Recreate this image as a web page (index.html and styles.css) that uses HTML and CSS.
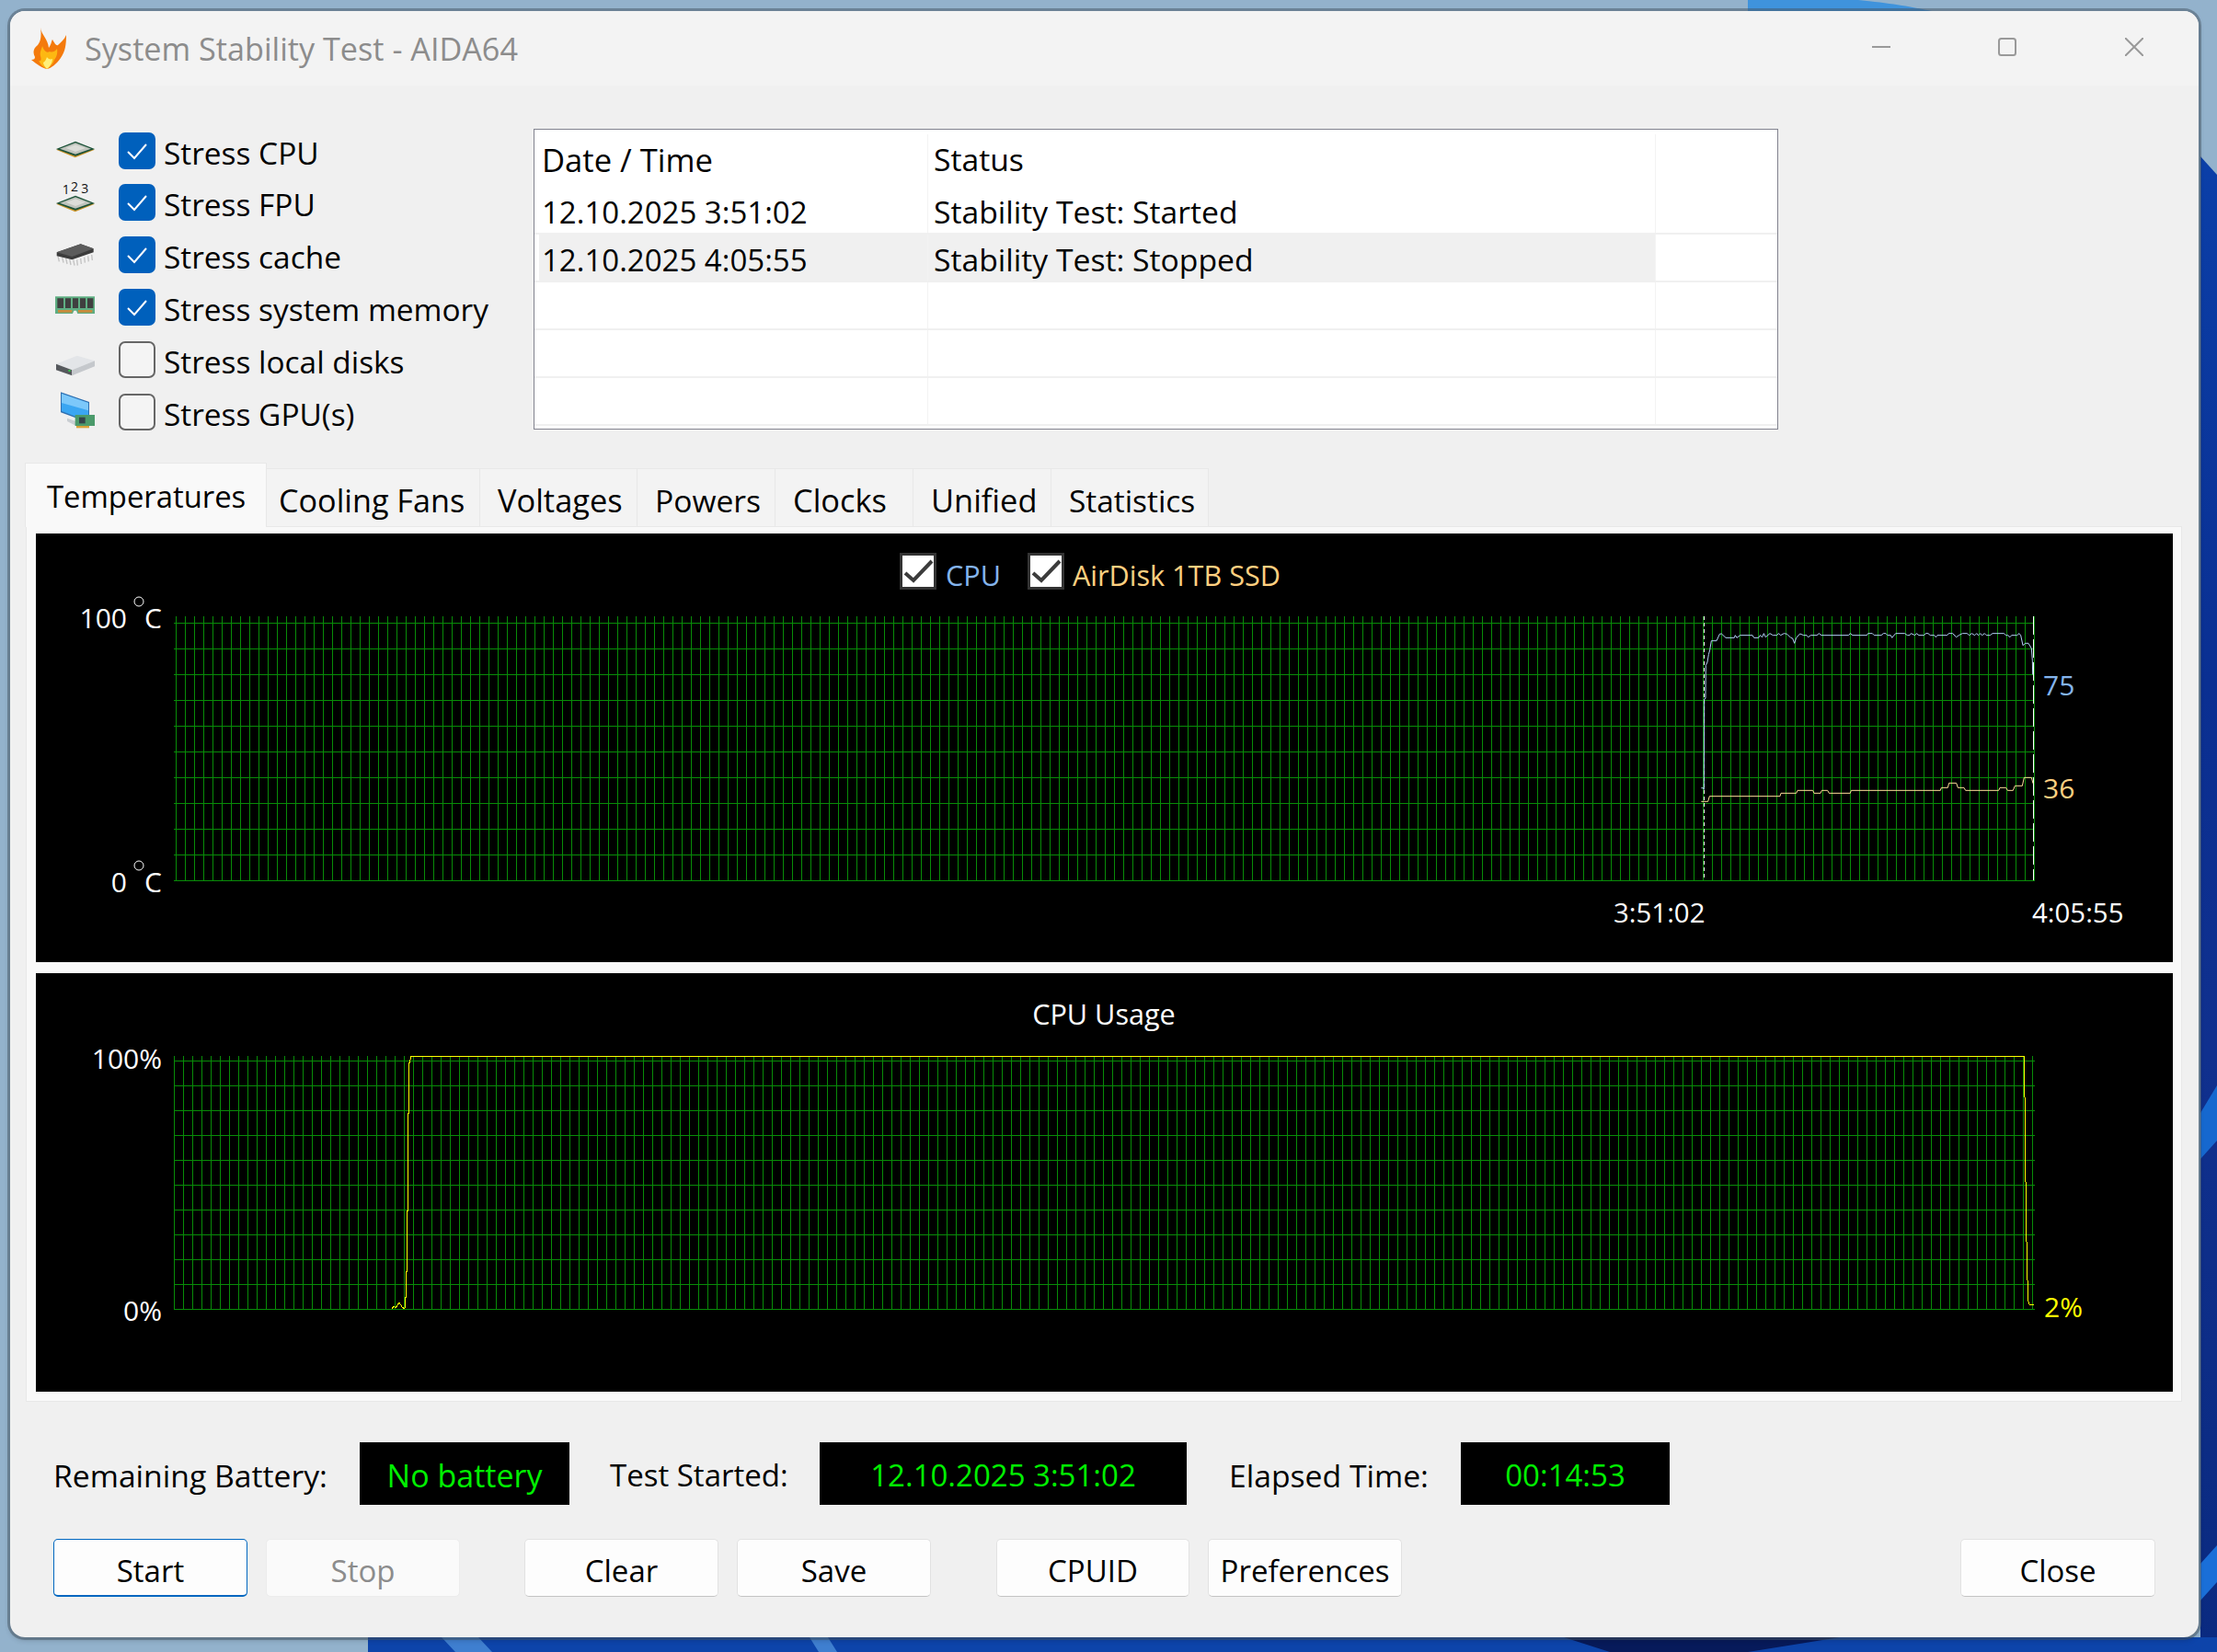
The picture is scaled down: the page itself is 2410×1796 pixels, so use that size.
FILE: index.html
```html
<!DOCTYPE html>
<html lang="en">
<head>
    <meta charset="UTF-8">
    <title>System Stability Test - AIDA64</title>
    <link rel="stylesheet" href="styles.css">
</head>
<body>
    <svg class="wallpaper" viewBox="0 0 2410 1796" preserveAspectRatio="none">
        <defs>
            <linearGradient id="wallRight" x1="0" y1="0" x2="0" y2="1">
                <stop offset="0" stop-color="#0b3fa8"/>
                <stop offset="0.35" stop-color="#0a2f92"/>
                <stop offset="0.6" stop-color="#10308e"/>
                <stop offset="1" stop-color="#0a2a80"/>
            </linearGradient>
        </defs>
        <rect width="2410" height="1796" fill="#93b2cc"/>
        <path d="M1900 0H2020C2060 4 2080 8 2100 12H1900Z" fill="#3f93dc"/>
        <path d="M2392 170L2410 190V1796H2392Z" fill="url(#wallRight)"/>
        <path d="M2392 1210L2410 1180V1240L2392 1260Z" fill="#1668cf"/>
        <path d="M2392 1700L2410 1680V1720L2392 1740Z" fill="#1a6fd8"/>
        <path d="M400 1780H2410V1796H400Z" fill="#0d44aa"/>
        <path d="M1700 1780H2000L1900 1796H1750Z" fill="#071a5a"/>
        <path d="M480 1780H520L535 1796H495ZM880 1780H900L910 1796H890Z" fill="#3f7fd0"/>
    </svg>

    <div class="window">
        <div class="titlebar">
            <svg class="app-icon" viewBox="0 0 38 45">
                <path d="M10 0C11 8 18 12 19 22C22 18 22 14 23 13C26 18 27 20 29 19C32 16 36 13 38 8C38 18 37 26 32 33C27 40 22 44 17 45C12 44 6 40 0 35C3 35 4 34 4 32C1 26 3 22 7 19C11 14 11 7 10 0Z" fill="#f47a0c"/>
                <path d="M12 20C14 26 17 28 20 26C22 27 25 27 28 23C29 28 27 33 25 35C24 39 20 43 17 45C13 43 10 40 8 36C11 37 11 34 10 31C9 27 11 24 12 20Z" fill="#fdb812"/>
                <path d="M17 32C18 34 21 35 23 34C23 38 20 43 17 45C15 43 13 40 13 38C15 37 16 35 17 32Z" fill="#fff07a"/>
            </svg>
            <span class="title-text">System Stability Test - AIDA64</span>
            <div class="controls">
                <svg class="ctl ctl-min" viewBox="0 0 20 20"><path d="M0 10H20"/></svg>
                <svg class="ctl ctl-max" viewBox="0 0 20 20"><rect x="1" y="1" width="18" height="18" rx="2.5"/></svg>
                <svg class="ctl ctl-close" viewBox="0 0 20 20"><path d="M0 0L20 20M20 0L0 20"/></svg>
            </div>
        </div>

        <div class="content">
            <div class="top-row">
                <div class="stress-list">
                    <div class="stress-row">
                        <svg class="stress-icon" viewBox="57 16 129 171">
                            <path d="M60 99L122 125L186 99L122 84Z" fill="#cf962a"/>
                            <path d="M60 97L123 72L186 97L123 120Z" fill="#1c5238"/>
                            <path d="M72 96L123 77L174 96L123 114Z" fill="#bfc3bc"/>
                            <path d="M92 94L123 83L156 94L123 106Z" fill="#dcddd8"/>
                        </svg>
                        <span class="check on"><svg viewBox="0 0 40 40"><path d="M10 21L17 28L30 13"/></svg></span>
                        <span class="stress-label">Stress CPU</span>
                    </div>
                    <div class="stress-row">
                        <svg class="stress-icon" viewBox="57 186 129 171">
                            <text x="80" y="243" class="fpu-num">1</text>
                            <text x="108" y="233" class="fpu-num">2</text>
                            <text x="142" y="240" class="fpu-num">3</text>
                            <path d="M60 275L122 301L186 275L122 260Z" fill="#cf962a"/>
                            <path d="M60 273L123 248L186 273L123 296Z" fill="#1c5238"/>
                            <path d="M72 272L123 253L174 272L123 290Z" fill="#bfc3bc"/>
                            <path d="M92 270L123 259L156 270L123 282Z" fill="#dcddd8"/>
                        </svg>
                        <span class="check on"><svg viewBox="0 0 40 40"><path d="M10 21L17 28L30 13"/></svg></span>
                        <span class="stress-label">Stress FPU</span>
                    </div>
                    <div class="stress-row">
                        <svg class="stress-icon" viewBox="57 356 129 171">
                            <path d="M66 444L70 462M80 448L84 466M92 451L96 470M104 454L108 473M116 456L120 475M128 456L130 475M140 452L142 470M152 448L154 466M164 444L166 462M176 440L178 458" stroke="#c2c2c2" stroke-width="4"/>
                            <path d="M62 432L140 405L182 420V432L112 456L62 444Z" fill="#3c3c3c"/>
                            <path d="M62 432L112 446L182 420L140 405Z" fill="#5c5c5c"/>
                        </svg>
                        <span class="check on"><svg viewBox="0 0 40 40"><path d="M10 21L17 28L30 13"/></svg></span>
                        <span class="stress-label">Stress cache</span>
                    </div>
                    <div class="stress-row">
                        <svg class="stress-icon" viewBox="57 527 129 171">
                            <path d="M57 576H186V632H130L126 622H118L114 632H57Z" fill="#5fae82"/>
                            <path d="M64 582H84V614H64ZM90 582H108V614H90ZM114 582H132V614H114ZM138 582H156V614H138ZM162 582H181V614H162Z" fill="#3f3f3f"/>
                            <path d="M66 620H112V628H66ZM132 620H178V628H132Z" fill="#c98b3c"/>
                        </svg>
                        <span class="check on"><svg viewBox="0 0 40 40"><path d="M10 21L17 28L30 13"/></svg></span>
                        <span class="stress-label">Stress system memory</span>
                    </div>
                    <div class="stress-row">
                        <svg class="stress-icon" viewBox="57 697 129 171">
                            <path d="M60 798L128 771L186 788L112 818Z" fill="#e3e5e8"/>
                            <path d="M60 798L112 818V836L60 818Z" fill="#55585c"/>
                            <path d="M112 818L186 788V806L112 836Z" fill="#c5c8cc"/>
                            <rect x="100" y="817" width="7" height="6" fill="#35c24a"/>
                        </svg>
                        <span class="check"></span>
                        <span class="stress-label">Stress local disks</span>
                    </div>
                    <div class="stress-row">
                        <svg class="stress-icon" viewBox="57 868 129 171">
                            <path d="M75 890L168 922V990L75 956Z" fill="#2f6fb0"/>
                            <path d="M78 895L165 925V986L78 952Z" fill="#3aa6f2"/>
                            <path d="M78 895L165 925V950L78 925Z" fill="#7cc8fa"/>
                            <path d="M96 975L125 985V1000L96 985Z" fill="#c9ced2"/>
                            <rect x="122" y="964" width="64" height="36" fill="#4b9a6b"/>
                            <rect x="135" y="972" width="20" height="20" fill="#34434a"/>
                            <rect x="126" y="1000" width="42" height="7" fill="#d9a23a"/>
                        </svg>
                        <span class="check"></span>
                        <span class="stress-label">Stress GPU(s)</span>
                    </div>
                </div>

                <div class="log-list">
                    <div class="log-row log-head"><span class="log-date">Date / Time</span><span class="log-status">Status</span><span class="log-rest"></span></div>
                    <div class="log-row"><span class="log-date">12.10.2025 3:51:02</span><span class="log-status">Stability Test: Started</span><span class="log-rest"></span></div>
                    <div class="log-row log-selected"><span class="log-date">12.10.2025 4:05:55</span><span class="log-status">Stability Test: Stopped</span><span class="log-rest"></span></div>
                    <div class="log-row"><span class="log-date"></span><span class="log-status"></span><span class="log-rest"></span></div>
                    <div class="log-row"><span class="log-date"></span><span class="log-status"></span><span class="log-rest"></span></div>
                    <div class="log-row"><span class="log-date"></span><span class="log-status"></span><span class="log-rest"></span></div>
                </div>
            </div>

            <div class="tabs">
                <div class="tab tab-active">Temperatures</div>
                <div class="tab tab-fans">Cooling Fans</div>
                <div class="tab tab-volt">Voltages</div>
                <div class="tab tab-pow">Powers</div>
                <div class="tab tab-clk">Clocks</div>
                <div class="tab tab-uni">Unified</div>
                <div class="tab tab-stat">Statistics</div>
            </div>

            <div class="tab-panel">
                <svg class="chart chart-temp" viewBox="39 580 2323 466">
                    <defs>
                        <pattern id="gridTempV" x="191" y="670" width="10" height="287" patternUnits="userSpaceOnUse"><rect width="1" height="287" fill="#088c08"/></pattern>
                        <pattern id="gridTempH" x="189" y="677" width="2023" height="28" patternUnits="userSpaceOnUse"><rect width="2023" height="1" fill="#088c08"/></pattern>
                    </defs>
                    <rect x="191" y="670" width="2021" height="287" fill="url(#gridTempV)"/>
                    <rect x="189" y="677" width="2023" height="281" fill="url(#gridTempH)"/>

                    <rect x="979.5" y="602.5" width="37" height="37" class="legend-box"/>
                    <path d="M984 623L993 631L1013 610" class="legend-check"/>
                    <text x="1028" y="637" class="t-blue t-wide">CPU</text>
                    <rect x="1118.5" y="602.5" width="37" height="37" class="legend-box"/>
                    <path d="M1123 623L1132 631L1152 610" class="legend-check"/>
                    <text x="1166" y="637" class="t-orange t-wide">AirDisk 1TB SSD</text>

                    <text x="138" y="683" class="t-axis" text-anchor="end">100</text>
                    <circle cx="151" cy="654" r="5" class="deg"/>
                    <text x="157" y="683" class="t-axis">C</text>
                    <text x="138" y="970" class="t-axis" text-anchor="end">0</text>
                    <circle cx="151" cy="941" r="5" class="deg"/>
                    <text x="157" y="970" class="t-axis">C</text>

                    <path d="M1852.5 670V957" class="mark dotted"/>
                    <path d="M2210.5 670V957" class="mark dashed"/>
                    <g transform="translate(1800 640) scale(.33333)">
                        <polyline class="plot plot-blue" points="148,650 155,650 157,655 158,360 162,358 163,250 168,240 172,215 176,200 181,170 198,170 208,148 214,147 228,160 256,160 259,152 264,160 275,152 315,152 320,160 335,160 340,152 347,158 352,146 358,158 372,146 382,152 395,152 400,146 407,152 418,146 428,148 440,160 446,162 452,178 458,160 470,147 482,152 492,152 497,158 505,152 525,152 532,146 540,152 552,152 628,152 634,146 642,152 688,152 692,146 706,146 712,152 735,152 742,146 750,146 756,152 766,152 770,160 782,146 812,146 820,152 828,152 832,146 845,152 850,146 858,152 875,152 880,146 888,146 895,152 908,152 913,158 918,152 950,152 955,146 968,146 980,158 988,152 1000,146 1015,146 1022,152 1030,146 1040,152 1046,146 1052,152 1058,146 1064,152 1072,146 1078,152 1090,152 1098,146 1135,146 1142,152 1148,152 1155,158 1160,152 1178,152 1185,146 1190,152 1197,185 1205,178 1215,178 1225,195 1228,235 1229,280"/>
                        <polyline class="plot plot-orange" points="148,694 170,694 175,677 405,677 408,667 458,667 462,658 512,658 516,667 537,667 541,658 560,658 565,667 634,667 637,658 928,658 931,649 952,649 956,634 980,634 985,649 1005,649 1010,658 1118,658 1122,649 1142,649 1147,658 1165,658 1171,643 1195,643 1201,616 1225,616 1230,635"/>
                    </g>

                    <text x="2221" y="756" class="t-blue">75</text>
                    <text x="2221" y="868" class="t-orange">36</text>
                    <text x="1754" y="1003" class="t-axis t-time">3:51:02</text>
                    <text x="2209" y="1003" class="t-axis t-time">4:05:55</text>
                </svg>

                <svg class="chart chart-cpu" viewBox="39 1058 2323 455">
                    <defs>
                        <pattern id="gridCpuV" x="189" y="1148" width="10" height="276" patternUnits="userSpaceOnUse"><rect width="1" height="276" fill="#088c08"/></pattern>
                        <pattern id="gridCpuH" x="189" y="1153" width="2023" height="27" patternUnits="userSpaceOnUse"><rect width="2023" height="1" fill="#088c08"/></pattern>
                    </defs>
                    <rect x="189" y="1148" width="2021" height="276" fill="url(#gridCpuV)"/>
                    <rect x="189" y="1153" width="2023" height="271" fill="url(#gridCpuH)"/>

                    <text x="1200" y="1114" class="t-axis t-wide" text-anchor="middle">CPU Usage</text>
                    <text x="176" y="1162" class="t-axis" text-anchor="end">100%</text>
                    <text x="176" y="1436" class="t-axis" text-anchor="end">0%</text>

                    <polyline class="plot plot-yellow" points="426,1423 428,1420 430,1422 434,1416 437,1421 440,1423 440.5,1410 441.5,1410 441.5,1382 442.5,1382 442.5,1316 443.5,1316 443.5,1210 444.5,1210 444.5,1155 445.5,1155 446.5,1148.5 2200.5,1148.5 2200.5,1193 2201.5,1193 2201.5,1285 2202.5,1285 2202.5,1350 2203.5,1350 2203.5,1392 2204.5,1392 2204.5,1413 2206,1418 2210.5,1418"/>
                    <text x="2222" y="1432" class="t-yellow">2%</text>
                </svg>
            </div>

            <div class="status-row">
                <span class="status-label sl-battery">Remaining Battery:</span>
                <span class="status-box sb-battery">No battery</span>
                <span class="status-label sl-started">Test Started:</span>
                <span class="status-box sb-started">12.10.2025 3:51:02</span>
                <span class="status-label sl-elapsed">Elapsed Time:</span>
                <span class="status-box sb-elapsed">00:14:53</span>
            </div>

            <div class="button-row">
                <button class="btn btn-focus">Start</button>
                <button class="btn btn-disabled">Stop</button>
                <button class="btn btn-clear">Clear</button>
                <button class="btn">Save</button>
                <button class="btn btn-cpuid">CPUID</button>
                <button class="btn">Preferences</button>
                <button class="btn btn-close">Close</button>
            </div>
        </div>
    </div>
</body>
</html>
```

FILE: styles.css
```css
* {
    box-sizing: border-box;
}
html, body {
    margin: 0;
    height: 100%;
}
body {
    position: relative;
    width: 2410px;
    height: 1796px;
    overflow: hidden;
    padding: 12px 20px 16px 11px;
    background-color: #93b2cc;
    font-family: "Open Sans", "Noto Sans", sans-serif;
    font-size: 33.4px;
    color: #000;
}
.wallpaper {
    position: absolute;
    left: 0;
    top: 0;
    width: 2410px;
    height: 1796px;
}

/* window */
.window {
    position: relative;
    width: 2379px;
    height: 1768px;
    border-radius: 16px;
    background-color: #f0f0f0;
    box-shadow: 0 0 0 3px rgba(70,85,100,0.5), 0 3px 6px rgba(0,0,0,0.2);
    overflow: hidden;
}
.titlebar {
    position: relative;
    display: flex;
    align-items: center;
    height: 81px;
    background-color: #f3f3f3;
    padding-left: 23px;
}
.app-icon {
    width: 38px;
    height: 45px;
    margin-right: 20px;
}
.title-text {
    font-size: 34.2px;
    color: #8c8c8c;
}
.controls {
    position: absolute;
    right: 0;
    top: 0;
}
.ctl {
    position: absolute;
    width: 20px;
    height: 20px;
    top: 29px;
    fill: none;
    stroke: #999;
    stroke-width: 2;
}
.ctl-min {
    right: 335px;
}
.ctl-max {
    right: 198px;
}
.ctl-close {
    right: 60px;
}

.content {
    display: flex;
    flex-direction: column;
}

/* stress options + log */
.top-row {
    display: flex;
    margin-top: 47px;
    height: 327px;
}
.stress-list {
    width: 569px;
    margin-top: 3.6px;
    margin-left: 49px;
    flex: none;
    margin-right: -49px;
}
.stress-row {
    display: flex;
    align-items: flex-start;
    height: 56.8px;
}
.stress-icon {
    width: 43px;
    height: 57px;
    margin-top: -8.4px;
    margin-right: 26px;
    flex: none;
}
.fpu-num {
    font-family: "Open Sans", sans-serif;
    font-size: 42px;
    fill: #111;
}
.check {
    width: 40px;
    height: 40px;
    flex: none;
    margin-right: 9px;
    border: 2px solid #666;
    border-radius: 7px;
    background-color: #f4f4f4;
}
.check svg {
    display: none;
}
.check.on {
    border: none;
    background-color: #0060bc;
}
.check.on svg {
    display: block;
    width: 40px;
    height: 40px;
    fill: none;
    stroke: #fff;
    stroke-width: 2;
}
.stress-label {
    line-height: 45px;
    white-space: nowrap;
}

.log-list {
    width: 1353px;
    margin-left: 0;
    border: 1px solid #82838f;
    background-color: white;
    overflow: hidden;
    height: 327px;
}
.log-row {
    display: flex;
    height: 52px;
    border-bottom: 2px solid #f0f0f0;
}
.log-head {
    height: 62px;
    border-bottom: none;
    padding-top: 5px;
}
.log-date {
    width: 428px;
    flex: none;
    padding-left: 8px;
    padding-top: 4px;
    border-right: 1px solid #f3f3f3;
    font-size: 33px;
    line-height: 48px;
    white-space: nowrap;
}
.log-head .log-date {
    font-size: 34.6px;
}
.log-status {
    width: 791px;
    flex: none;
    padding-left: 6px;
    padding-top: 3px;
    border-right: 1px solid #f3f3f3;
    font-size: 33.7px;
    line-height: 48px;
    white-space: nowrap;
}
.log-rest {
    flex: 1;
}
.log-selected .log-date,
.log-selected .log-status {
    background-color: #f0f0f0;
}
.log-selected .log-date {
    margin-left: 5px;
    width: 423px;
    padding-left: 3px;
}

/* tabs */
.tabs {
    display: flex;
    align-items: flex-end;
    margin-top: 36px;
    padding-left: 16px;
    height: 69px;
}
.tab {
    height: 63px;
    line-height: 68px;
    background-color: #f3f3f3;
    border-top: 1px solid #e8e8e8;
    border-right: 1px solid #e8e8e8;
    padding-left: 19px;
    font-size: 34.4px;
    white-space: nowrap;
}
.tab-active {
    position: relative;
    z-index: 1;
    height: 70px;
    width: 263px;
    margin-bottom: -1px;
    padding-left: 23px;
    background-color: #f9f9f9;
    border: 1px solid #e8e8e8;
    border-bottom: none;
    font-size: 32.8px;
    line-height: 71px;
}
.tab-fans { width: 232px; padding-left: 13px; font-size: 34.2px; }
.tab-volt { width: 171px; }
.tab-pow { width: 150px; font-size: 33.6px; }
.tab-clk { width: 150px; }
.tab-uni { width: 150px; }
.tab-stat { width: 171px; font-size: 33.4px; }

.tab-panel {
    display: flex;
    flex-direction: column;
    gap: 12px;
    margin-left: 17px;
    width: 2344px;
    height: 952px;
    padding: 7px 9px 0 10px;
    background-color: #f9f9f9;
    border: 1px solid #e8e8e8;
}

/* charts */
.chart {
    display: block;
    width: 2323px;
    flex: none;
    background-color: black;
    font-family: "Open Sans", sans-serif;
    font-size: 30px;
}
.chart-temp {
    height: 466px;
}
.chart-cpu {
    height: 455px;
}
.t-axis {
    fill: #fff;
}
.t-time {
    font-size: 29.4px;
}
.t-wide {
    font-size: 30.6px;
}
.t-blue {
    fill: #84b4ec;
}
.t-orange {
    fill: #ffd080;
}
.t-yellow {
    fill: #ffff00;
}
.deg {
    fill: none;
    stroke: #fff;
    stroke-width: 1;
}
.legend-box {
    fill: #fff;
    stroke: #333;
    stroke-width: 3;
}
.legend-check {
    fill: none;
    stroke: #3c3c3c;
    stroke-width: 4;
}
.mark {
    fill: none;
    stroke: #fff;
    stroke-width: 1;
    shape-rendering: crispEdges;
}
.dotted {
    stroke-dasharray: 4 3;
}
.dashed {
    stroke-dasharray: 20 5;
}
.plot {
    fill: none;
    stroke-width: 3;
    stroke-linejoin: round;
    shape-rendering: crispEdges;
}
.plot-blue {
    stroke: #b4d4f8;
}
.plot-orange {
    stroke: #ffe09a;
}
.plot-yellow {
    stroke: #ffff00;
    stroke-width: 1;
}

/* status */
.status-row {
    display: flex;
    margin-top: 44px;
    margin-left: 47px;
    height: 68px;
    font-size: 33.7px;
}
.status-label {
    line-height: 72px;
    white-space: nowrap;
}
.sl-battery { width: 333px; }
.sl-started { width: 272px; padding-left: 44px; font-size: 33px; }
.sl-elapsed { width: 298px; padding-left: 46px; }
.status-box {
    background-color: black;
    color: #00f000;
    text-align: center;
    line-height: 72px;
    white-space: nowrap;
}
.sb-battery { width: 228px; font-size: 34px; }
.sb-started { width: 399px; font-size: 33px; }
.sb-elapsed { width: 227px; font-size: 33px; }

/* buttons */
.button-row {
    display: flex;
    gap: 20px;
    margin-top: 37px;
    padding: 0 47px;
}
button, .btn {
    width: 211px;
    height: 63px;
    padding: 6px 0 0;
    background-color: #fdfdfd;
    border: 1px solid #e2e2e2;
    border-bottom-color: #c4c4c4;
    border-radius: 5px;
    font-family: "Open Sans", sans-serif;
    font-size: 33px;
    color: #000;
}
.btn-focus {
    border: 1px solid #0067c0;
    border-bottom-width: 2px;
}
.btn-disabled {
    background-color: #fafafa;
    border-color: #ececec;
    color: #8c8c8c;
}
.btn-clear {
    margin-left: 50px;
}
.btn-cpuid {
    width: 210px;
    margin-left: 51px;
}
.btn-close {
    width: 212px;
    margin-left: auto;
}
```
